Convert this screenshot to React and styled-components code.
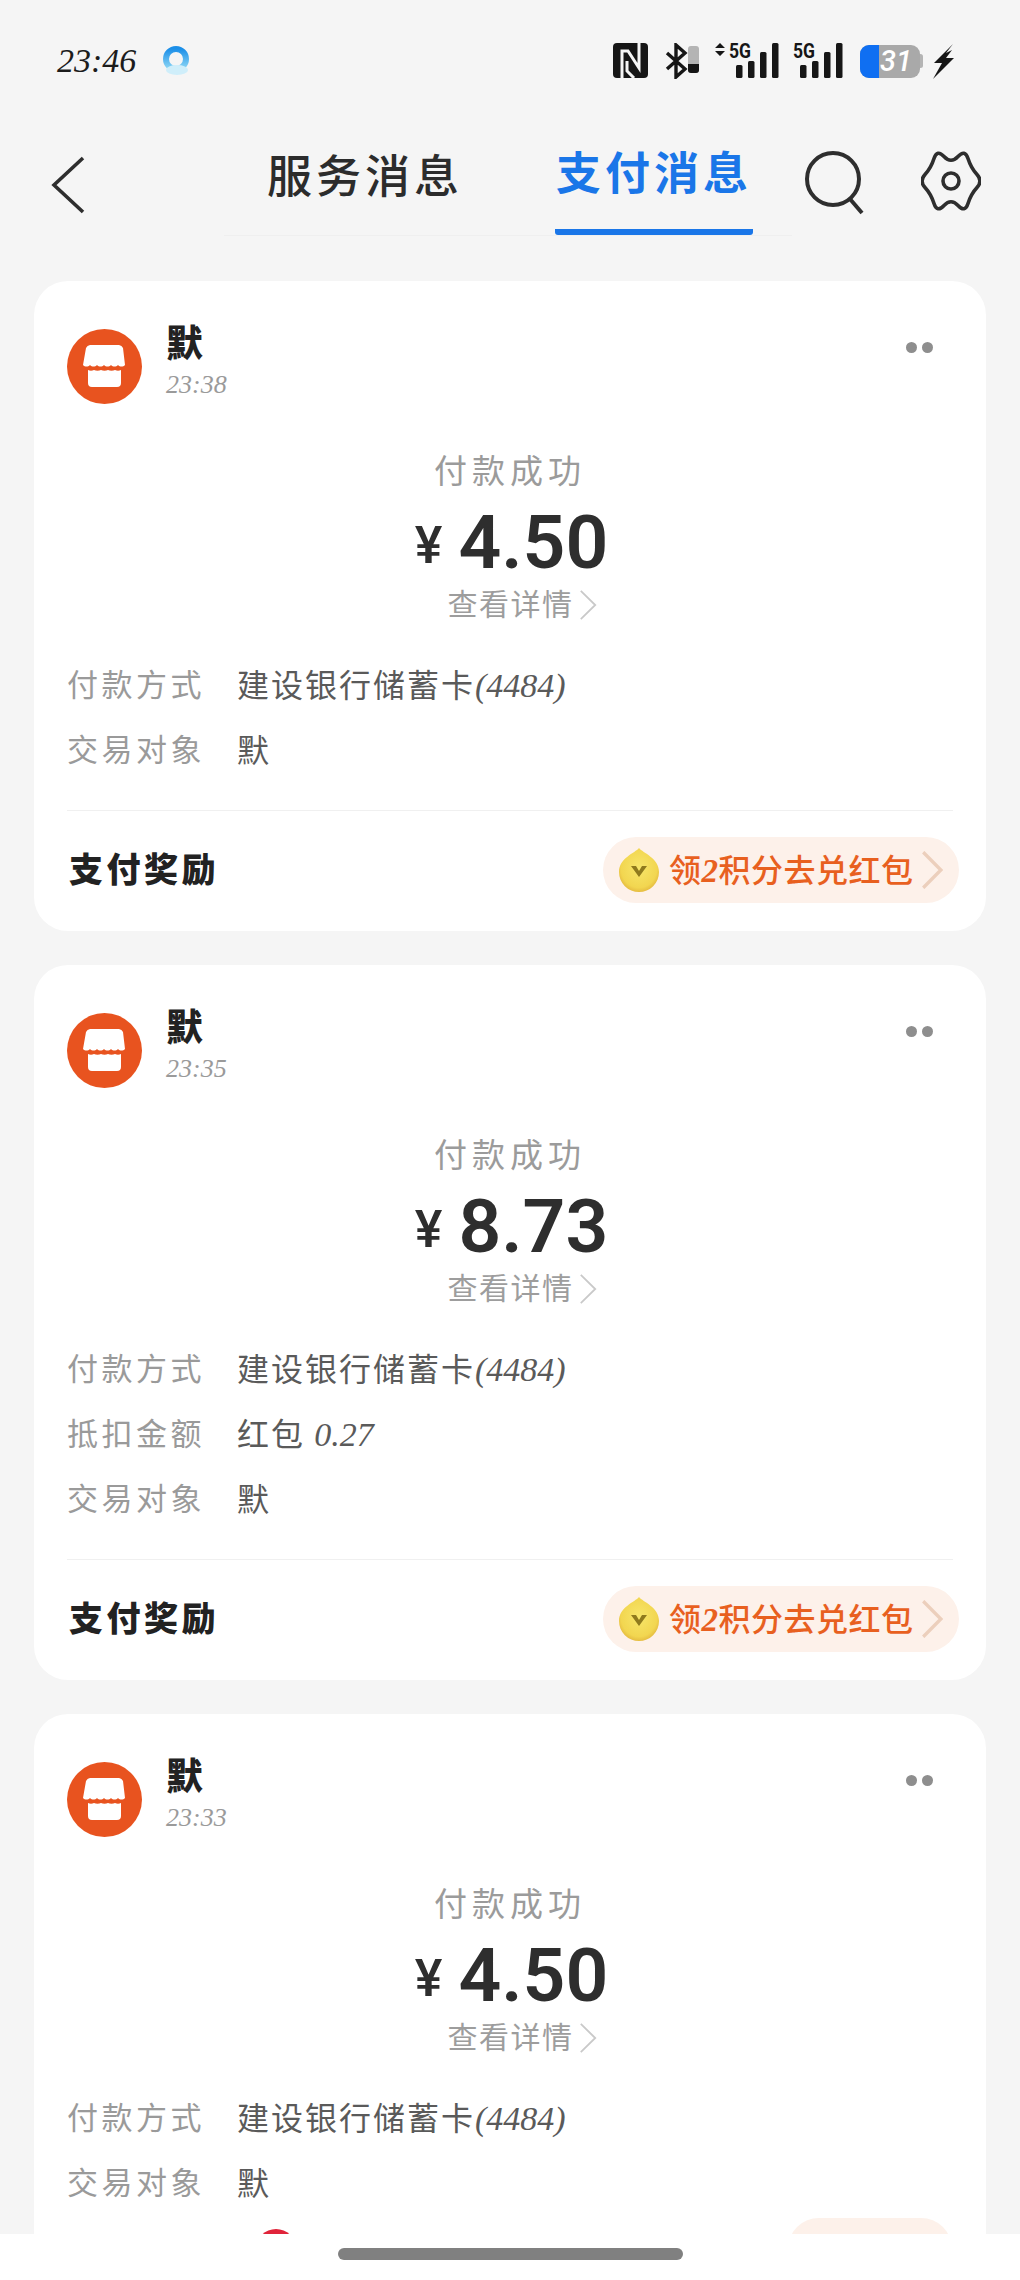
import React from 'react';
import styled, { createGlobalStyle } from 'styled-components';

const CJK = '"Noto Sans CJK SC", "Noto Sans", sans-serif';
const SERIF = '"Liberation Serif", "Noto Sans CJK SC", serif';

const GlobalStyle = createGlobalStyle`
  html, body {
    margin: 0;
    padding: 0;
    background: #f5f5f5;
  }
  * {
    box-sizing: border-box;
  }
`;

const Page = styled.div`
  position: relative;
  width: 1020px;
  height: 2280px;
  overflow: hidden;
  background: #f5f5f5;
  font-family: ${CJK};
`;

const StatusBar = styled.div`
  height: 118px;
  padding: 43px 66px 0 57px;
  display: flex;
  justify-content: space-between;
  align-items: flex-start;
`;

const StatusLeft = styled.div`
  display: flex;
  align-items: center;
  gap: 25px;
  height: 35px;
`;

const Clock = styled.span`
  font: italic 400 34px/35px ${SERIF};
  color: #1c1c1c;
`;

const StatusIcons = styled.div`
  display: flex;
  align-items: flex-start;
`;

const Header = styled.div`
  height: 118px;
  display: flex;
`;

const BackSlot = styled.div`
  width: 224px;
  padding: 38px 0 0 51px;
`;

const Tabs = styled.div`
  width: 568px;
  height: 118px;
  display: flex;
  border-bottom: 1px solid #efefef;
`;

const Tab = styled.div`
  width: ${(p) => p.$w}px;
  margin-left: ${(p) => p.$ml}px;
  height: 117px;
  display: flex;
  justify-content: center;
  padding-top: ${(p) => (p.$active ? 23 : 26)}px;
  font-size: 45px;
  line-height: 60px;
  letter-spacing: 4px;
  white-space: nowrap;
  font-weight: ${(p) => (p.$active ? 700 : 500)};
  color: ${(p) => (p.$active ? '#1a76e8' : '#2c2c2c')};
  border-bottom: ${(p) => (p.$active ? '6px solid #1a76e8' : 'none')};
  border-radius: 3px;
`;

const HeaderIcons = styled.div`
  display: flex;
  padding: 33px 0 0 12px;
  gap: 55px;
`;

const CardList = styled.div`
  padding: 45px 34px 0;
  display: flex;
  flex-direction: column;
  gap: 34px;
`;

const Card = styled.div`
  background: #fff;
  border-radius: 34px;
  padding: 48px 33px 0;
`;

const CardTop = styled.div`
  display: flex;
  height: 75px;
`;

const Merchant = styled.div`
  margin-left: 24px;
  flex: 1;
`;

const MerchantName = styled.div`
  margin-top: -4px;
  font-size: 37px;
  line-height: 32px;
  font-weight: 900;
  color: #222;
`;

const MerchantTime = styled.div`
  margin-top: 10px;
  font: italic 400 26px/36px ${SERIF};
  color: #9a9a9a;
`;

const MoreDots = styled.div`
  display: flex;
  gap: 5px;
  padding: 13px 20px 0 0;
`;

const Dot = styled.span`
  width: 11px;
  height: 11px;
  border-radius: 50%;
  background: #8e8e8e;
`;

const Summary = styled.div`
  margin-top: 40px;
  display: flex;
  flex-direction: column;
  align-items: center;
`;

const StatusText = styled.div`
  font-size: 33px;
  line-height: 50px;
  letter-spacing: 5px;
  color: #9b9b9b;
`;

const Amount = styled.div`
  height: 96px;
  margin-left: 3px;
  display: flex;
  align-items: center;
  gap: 16px;
  color: #2e2e2e;
`;

const Yen = styled.span`
  font: 500 52px/1 Roboto, sans-serif;
  margin-top: 8px;
`;

const Figure = styled.span`
  font: 600 75px/1 Roboto, sans-serif;
`;

const DetailLink = styled.div`
  height: 30px;
  margin-left: 24px;
  padding-bottom: 6px;
  display: flex;
  align-items: center;
  gap: 5px;
  font-size: 30px;
  line-height: 24px;
  letter-spacing: 1.5px;
  color: #9d9d9d;
`;

const DetailArrow = styled.span`
  display: flex;
  margin-top: 6px;
`;

const Rows = styled.div`
  margin-top: 33px;
`;

const Row = styled.div`
  height: 65px;
  padding-bottom: 6px;
  display: flex;
  align-items: center;
`;

const PeekRow = styled(Row)`
  padding-bottom: 0;
`;

const RowLabel = styled.span`
  width: 170px;
  font-size: 31px;
  letter-spacing: 3.5px;
  color: #9a9a9a;
`;

const RowValue = styled.span`
  font-size: 32px;
  letter-spacing: 2px;
  color: #5a5a5a;
  em {
    font: italic 400 34px ${SERIF};
    letter-spacing: 0;
  }
`;

const RedMark = styled.span`
  width: 40px;
  height: 40px;
  margin-left: 19px;
  border-radius: 50%;
  background: #e0243a;
`;

const PeekPill = styled.span`
  margin-left: auto;
  margin-right: 1px;
  width: 164px;
  height: 62px;
  border-radius: 31px;
  background: #fdf1ea;
`;

const Divider = styled.div`
  margin-top: 27px;
  height: 1px;
  background: #f0f0f0;
`;

const CardFooter = styled.div`
  height: 120px;
  padding: 0 0 2px 2px;
  display: flex;
  justify-content: space-between;
  align-items: center;
`;

const RewardLabel = styled.span`
  margin-top: -6px;
  font-size: 34px;
  font-weight: 900;
  letter-spacing: 3.5px;
  color: #222;
`;

const RewardPill = styled.div`
  width: 356px;
  height: 66px;
  margin-right: -6px;
  padding: 0 0 0 16px;
  border-radius: 33px;
  background: #fdf1ea;
  display: flex;
  align-items: center;
`;

const RewardText = styled.span`
  margin-left: 10px;
  margin-right: 7px;
  margin-top: -4px;
  font-size: 32px;
  font-weight: 500;
  letter-spacing: 0.5px;
  white-space: nowrap;
  color: #e8601f;
  i {
    font: italic 700 33px ${SERIF};
  }
`;

const BottomBar = styled.div`
  position: absolute;
  left: 0;
  right: 0;
  top: 2234px;
  height: 46px;
  background: #fff;
  display: flex;
  justify-content: center;
  padding-top: 14px;
`;

const HomeHandle = styled.div`
  width: 345px;
  height: 12px;
  border-radius: 6px;
  background: #808080;
`;

function BrowserIcon() {
  return (
    <svg width="30" height="32" viewBox="0 0 30 32">
      <defs>
        <linearGradient id="qb" x1="0" y1="0" x2="0" y2="1">
          <stop offset="0" stopColor="#1c8fe8" />
          <stop offset="1" stopColor="#8fd8f5" />
        </linearGradient>
      </defs>
      <circle cx="15" cy="14" r="10" fill="none" stroke="url(#qb)" strokeWidth="6" />
      <ellipse cx="16" cy="25" rx="11" ry="5" fill="#cfeefa" />
    </svg>
  );
}

function NfcIcon() {
  return (
    <svg width="35" height="35" viewBox="0 0 35 35" style={{ marginRight: 17 }}>
      <rect width="35" height="35" rx="4" fill="#161616" />
      <path d="M9 35V8h6l11 17V0" fill="none" stroke="#f5f5f5" strokeWidth="3" />
      <path d="M14 18v10l7 7" fill="none" stroke="#f5f5f5" strokeWidth="3" />
    </svg>
  );
}

function BluetoothIcon() {
  return (
    <svg width="34" height="36" viewBox="0 0 34 36" style={{ marginRight: 16 }}>
      <path d="M2 10l18 16-9 8V2l9 8L2 26" fill="none" stroke="#161616" strokeWidth="3.4" />
      <rect x="23" y="3" width="11" height="27" rx="3" fill="#b4b4b4" />
      <path d="M23 21h11v6a3 3 0 0 1-3 3h-5a3 3 0 0 1-3-3z" fill="#161616" />
    </svg>
  );
}

function SignalIcon({ arrows, width, offset }) {
  const bars = [
    [offset + 7, 22, 13],
    [offset + 19, 18, 17],
    [offset + 31, 9, 26],
    [offset + 43, 0, 35],
  ];
  return (
    <svg
      width={width}
      height="42"
      viewBox={`0 -6 ${width} 42`}
      style={{ marginRight: arrows ? 14 : 17, marginTop: -6 }}
    >
      {arrows && <path d="M0 5l5-5 5 5zM0 8l5 5 5-5z" fill="#161616" />}
      <text
        x={offset}
        y="15"
        fontFamily="Roboto, sans-serif"
        fontSize="20"
        fontWeight="700"
        textLength="22"
        lengthAdjust="spacingAndGlyphs"
        fill="#161616"
      >
        5G
      </text>
      {bars.map(([x, y, h]) => (
        <rect key={x} x={x} y={y} width="6.5" height={h} rx="1.5" fill="#161616" />
      ))}
    </svg>
  );
}

function BatteryIcon() {
  return (
    <svg width="94" height="42" viewBox="0 -6 94 42" style={{ marginTop: -6 }}>
      <rect x="58" y="11" width="5" height="14" rx="2.5" fill="#b4b4b4" />
      <rect x="0" y="2" width="60" height="33" rx="9" fill="#a9a9a9" />
      <path d="M9 2h10v33H9a9 9 0 0 1-9-9V11a9 9 0 0 1 9-9z" fill="#0f6ff2" />
      <text x="20" y="28" fontFamily="Roboto, sans-serif" fontStyle="italic" fontWeight="500" fontSize="29" fill="#fff">
        31
      </text>
      <path d="M93 1L74 20h8L73 36l21-21h-8l6-8-6 3z" fill="#161616" />
    </svg>
  );
}

function BackIcon() {
  return (
    <svg width="34" height="58" viewBox="0 0 34 58">
      <path d="M32 2L3 29l29 27" fill="none" stroke="#2e2e2e" strokeWidth="3.6" />
    </svg>
  );
}

function SearchIcon() {
  return (
    <svg width="62" height="64" viewBox="0 0 62 64">
      <circle cx="29" cy="28" r="26" fill="none" stroke="#2e2e2e" strokeWidth="4" />
      <path d="M46 48l12 14" stroke="#2e2e2e" strokeWidth="4" />
    </svg>
  );
}

// gear outline: rounded polygon of lobes and dips, curve runs through the edge midpoints
const gearPoints = [
  [30, 13], [44, -2], [50, 17], [62, 30], [50, 43], [44, 62],
  [30, 47], [16, 62], [10, 43], [-2, 30], [10, 17], [16, -2],
];
const mid = (a, b) => `${(a[0] + b[0]) / 2} ${(a[1] + b[1]) / 2}`;
const gearPath =
  `M${mid(gearPoints[11], gearPoints[0])}` +
  gearPoints.map((p, i) => `Q${p[0]} ${p[1]} ${mid(p, gearPoints[(i + 1) % 12])}`).join('') +
  'Z';

function GearIcon() {
  return (
    <svg width="60" height="60" viewBox="0 0 60 60">
      <path d={gearPath} fill="none" stroke="#2e2e2e" strokeWidth="3.6" strokeLinejoin="round" />
      <circle cx="30" cy="30" r="8" fill="none" stroke="#2e2e2e" strokeWidth="3.6" />
    </svg>
  );
}

function ShopAvatar() {
  return (
    <svg width="75" height="75" viewBox="0 0 75 75">
      <circle cx="37.5" cy="37.5" r="37.5" fill="#e8531f" />
      <path
        d="M23 16h29a5 5 0 0 1 4 3l2 17c-2 2-5 2-7 0-2 2-5 2-7 0-2 2-5 2-7 0-2 2-5 2-7 0-2 2-5 2-7 0-2 2-5 2-7 0l3-17a5 5 0 0 1 4-3z"
        fill="#fff"
      />
      <path
        d="M21 41c2 1 4 1 6 0 2 1 5 1 7 0 2 1 5 1 7 0 2 1 5 1 7 0 2 1 4 1 6 0v13a4 4 0 0 1-4 4H25a4 4 0 0 1-4-4z"
        fill="#fff"
      />
    </svg>
  );
}

function Chevron({ width, height, color, strokeWidth }) {
  return (
    <svg width={width} height={height} viewBox="0 0 20 32" preserveAspectRatio="none">
      <path d="M2 1l16 15L2 31" fill="none" stroke={color} strokeWidth={strokeWidth} />
    </svg>
  );
}

function CoinIcon() {
  return (
    <svg width="40" height="44" viewBox="0 0 40 44">
      <defs>
        <radialGradient id="coin" cx="0.5" cy="0.45" r="0.6">
          <stop offset="0" stopColor="#f7e66a" />
          <stop offset="0.75" stopColor="#f2d650" />
          <stop offset="1" stopColor="#e0b13a" />
        </radialGradient>
      </defs>
      <path d="M20 0c4 5 20 10 20 24a20 20 0 0 1-40 0C0 10 16 5 20 0z" fill="url(#coin)" />
      <path d="M12 18l8 11 8-11h-5l-3 5-3-5z" fill="#8f7a1d" />
    </svg>
  );
}

const payments = [
  {
    time: '23:38',
    amount: '4.50',
    rows: [
      { label: '付款方式', value: <>建设银行储蓄卡<em>(4484)</em></> },
      { label: '交易对象', value: '默' },
    ],
  },
  {
    time: '23:35',
    amount: '8.73',
    rows: [
      { label: '付款方式', value: <>建设银行储蓄卡<em>(4484)</em></> },
      { label: '抵扣金额', value: <>红包 <em>0.27</em></> },
      { label: '交易对象', value: '默' },
    ],
  },
  {
    time: '23:33',
    amount: '4.50',
    peek: true,
    rows: [
      { label: '付款方式', value: <>建设银行储蓄卡<em>(4484)</em></> },
      { label: '交易对象', value: '默' },
    ],
  },
];

function PaymentCard({ payment }) {
  return (
    <Card>
      <CardTop>
        <ShopAvatar />
        <Merchant>
          <MerchantName>默</MerchantName>
          <MerchantTime>{payment.time}</MerchantTime>
        </Merchant>
        <MoreDots>
          <Dot />
          <Dot />
        </MoreDots>
      </CardTop>
      <Summary>
        <StatusText>付款成功</StatusText>
        <Amount>
          <Yen>¥</Yen>
          <Figure>{payment.amount}</Figure>
        </Amount>
        <DetailLink>
          查看详情
          <DetailArrow>
            <Chevron width={18} height={30} color="#c9c9c9" strokeWidth={2} />
          </DetailArrow>
        </DetailLink>
      </Summary>
      <Rows>
        {payment.rows.map((row) => (
          <Row key={row.label}>
            <RowLabel>{row.label}</RowLabel>
            <RowValue>{row.value}</RowValue>
          </Row>
        ))}
        {payment.peek && (
          <PeekRow>
            <RowLabel />
            <RedMark />
            <PeekPill />
          </PeekRow>
        )}
      </Rows>
      {!payment.peek && (
        <>
          <Divider />
          <CardFooter>
            <RewardLabel>支付奖励</RewardLabel>
            <RewardPill>
              <CoinIcon />
              <RewardText>领<i>2</i>积分去兑红包</RewardText>
              <Chevron width={22} height={38} color="#eccfbc" strokeWidth={3} />
            </RewardPill>
          </CardFooter>
        </>
      )}
    </Card>
  );
}

export default function App() {
  return (
    <Page>
      <GlobalStyle />
      <StatusBar>
        <StatusLeft>
          <Clock>23:46</Clock>
          <BrowserIcon />
        </StatusLeft>
        <StatusIcons>
          <NfcIcon />
          <BluetoothIcon />
          <SignalIcon arrows width={64} offset={14} />
          <SignalIcon width={50} offset={0} />
          <BatteryIcon />
        </StatusIcons>
      </StatusBar>
      <Header>
        <BackSlot>
          <BackIcon />
        </BackSlot>
        <Tabs>
          <Tab $w={198} $ml={42}>服务消息</Tab>
          <Tab $w={198} $ml={91} $active>支付消息</Tab>
        </Tabs>
        <HeaderIcons>
          <SearchIcon />
          <GearIcon />
        </HeaderIcons>
      </Header>
      <CardList>
        {payments.map((payment) => (
          <PaymentCard key={payment.time} payment={payment} />
        ))}
      </CardList>
      <BottomBar>
        <HomeHandle />
      </BottomBar>
    </Page>
  );
}
